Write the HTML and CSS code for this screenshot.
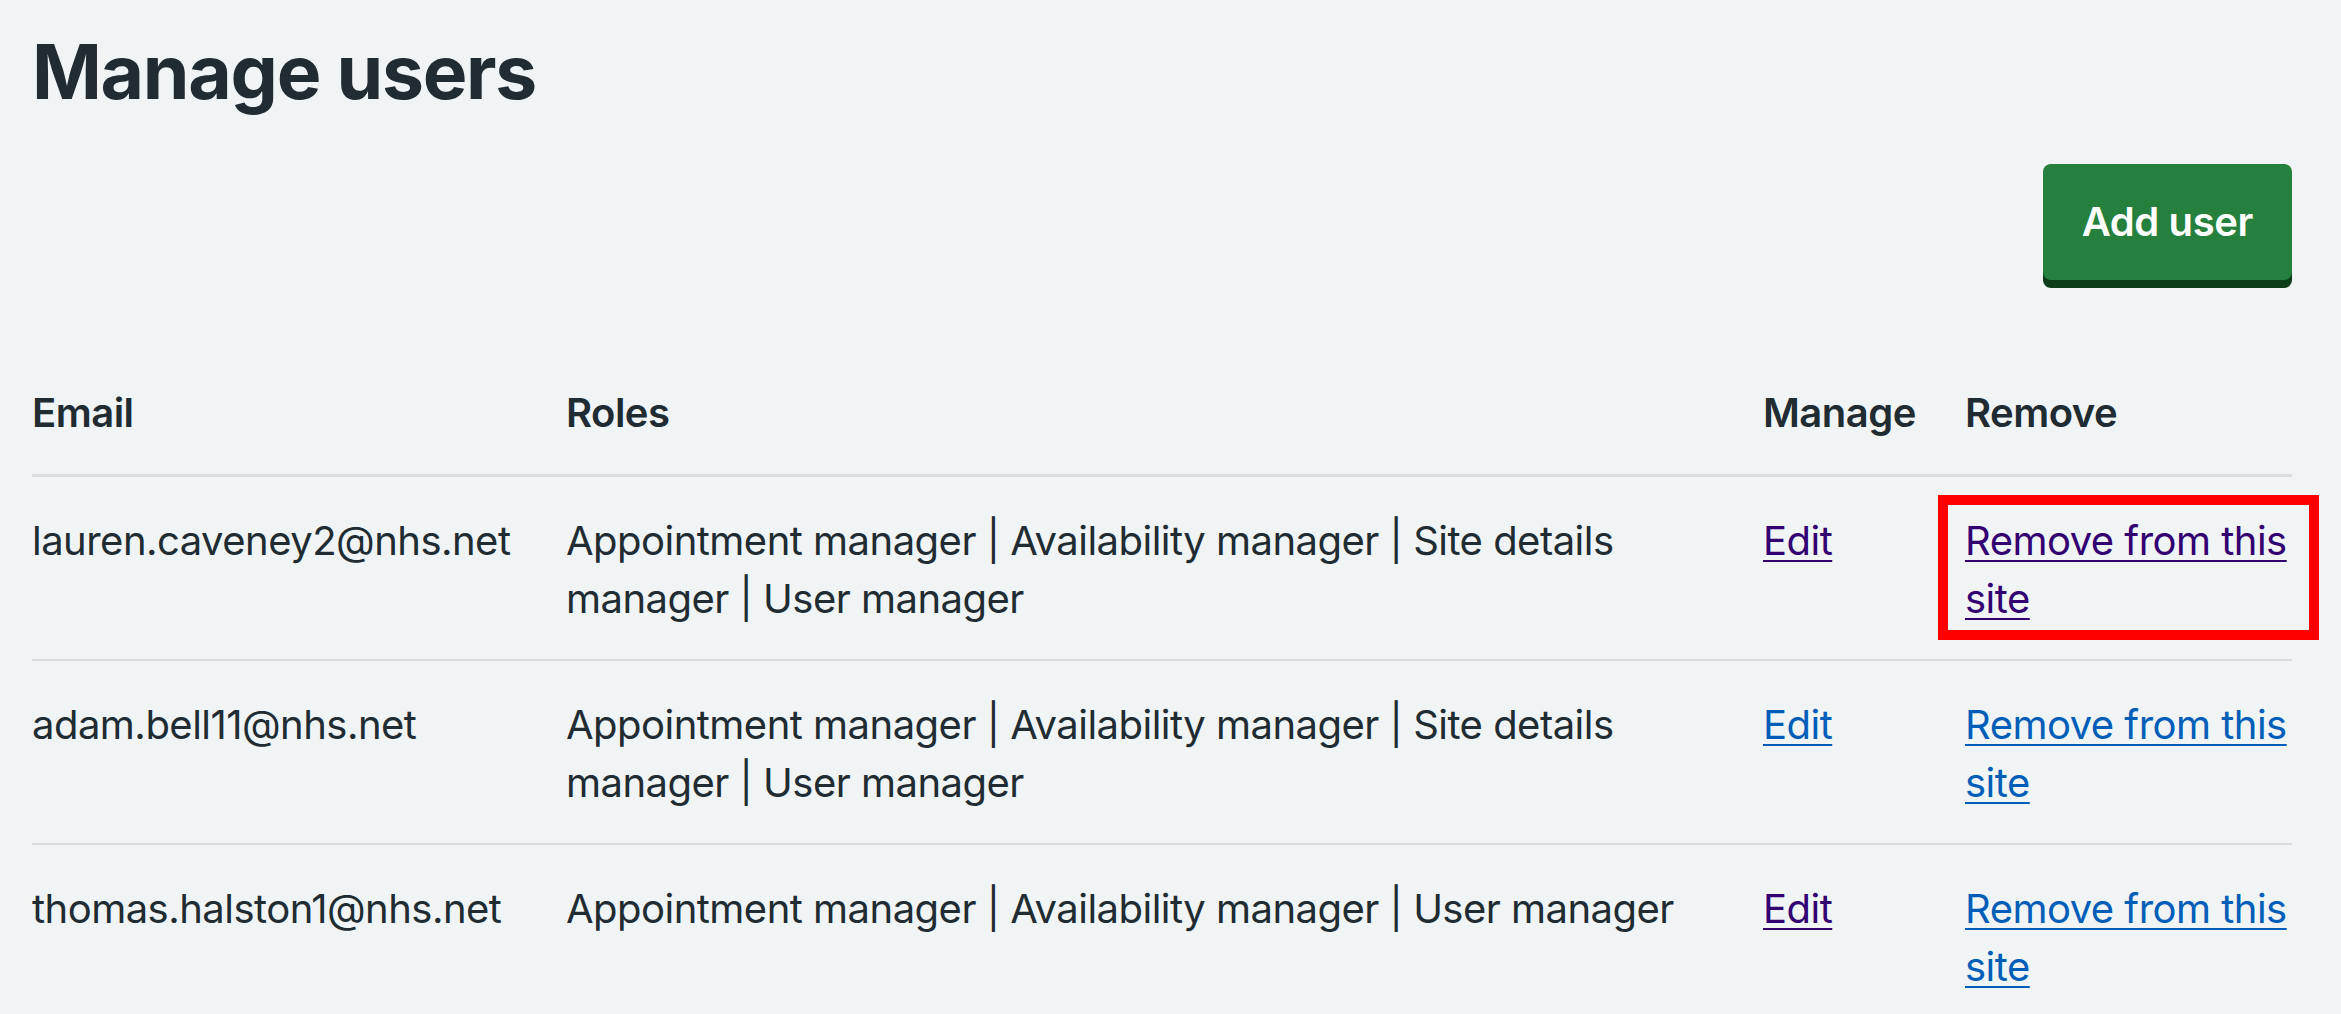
FILE: index.html
```html
<!DOCTYPE html>
<html lang="en">
<head>
  <meta charset="UTF-8">
  <title>Manage users</title>
  <link rel="stylesheet" href="styles.css">
</head>
<body>
  <div class="page">
    <h1 class="page-title">Manage users</h1>

    <div class="page-actions">
      <button class="button">Add user</button>
    </div>

    <table class="users-table">
      <colgroup>
        <col class="col-email">
        <col class="col-roles">
        <col class="col-manage">
        <col class="col-remove">
      </colgroup>
      <thead>
        <tr>
          <th>Email</th>
          <th>Roles</th>
          <th>Manage</th>
          <th>Remove</th>
        </tr>
      </thead>
      <tbody>
        <tr>
          <td>lauren.caveney2@nhs.net</td>
          <td>Appointment manager | Availability manager | Site details manager | User manager</td>
          <td><a href="#" class="link visited">Edit</a></td>
          <td>
            <div class="highlight">
              <a href="#" class="link visited">Remove from this site</a>
            </div>
          </td>
        </tr>
        <tr>
          <td>adam.bell11@nhs.net</td>
          <td>Appointment manager | Availability manager | Site details manager | User manager</td>
          <td><a href="#" class="link">Edit</a></td>
          <td><a href="#" class="link">Remove from this site</a></td>
        </tr>
        <tr>
          <td>thomas.halston1@nhs.net</td>
          <td>Appointment manager | Availability manager | User manager</td>
          <td><a href="#" class="link visited">Edit</a></td>
          <td><a href="#" class="link">Remove from this site</a></td>
        </tr>
      </tbody>
    </table>
  </div>
</body>
</html>
```

FILE: styles.css
```css
body {
  margin: 0;
  padding: 0;
  background-color: #f0f4f5;
  color: #212b32;
  font-family: Inter, "Liberation Sans", Arial, sans-serif;
  font-size: 40px;
  line-height: 58px;
  letter-spacing: -0.013em;
}

.page {
  padding: 28px 49px 0 32px;
}

.page-title {
  margin: 0;
  font-size: 75px;
  line-height: 87px;
  font-weight: 700;
  letter-spacing: -0.017em;
}

.page-actions {
  display: flex;
  justify-content: flex-end;
  margin-top: 49px;
  margin-bottom: 70px;
}

.button {
  font-family: inherit;
  font-size: 40px;
  line-height: 58px;
  font-weight: 600;
  letter-spacing: -0.01em;
  color: white;
  background-color: #26803d;
  border: 4px solid transparent;
  border-radius: 8px;
  padding: 25px 35px;
  box-shadow: 0 8px 0 #0b3d1b;
  cursor: pointer;
}

.users-table {
  width: 100%;
  border-collapse: collapse;
  table-layout: fixed;
}

.col-email {
  width: 534px;
}

.col-roles {
  width: 1197px;
}

.col-manage {
  width: 202px;
}

.col-remove {
  width: 327px;
}

.users-table th,
.users-table td {
  text-align: left;
  vertical-align: top;
  padding: 35px 33px 31px 0;
}

.users-table th {
  padding-top: 34px;
  padding-bottom: 32px;
  font-weight: 600;
  border-bottom: 3px solid #d8dde0;
}

.users-table th:last-child,
.users-table td:last-child {
  padding-right: 0;
}

.users-table td {
  font-weight: 400;
  border-bottom: 2px solid #d8dde0;
}

.users-table tbody tr:last-child td {
  border-bottom: none;
}

.link {
  color: #005eb8;
  text-decoration: underline;
  text-decoration-thickness: 2px;
  text-underline-offset: 5px;
}

.link.visited {
  color: #330072;
}

.highlight {
  position: relative;
}

.highlight::after {
  content: "";
  position: absolute;
  top: -17px;
  bottom: -12px;
  left: -27px;
  right: -27px;
  border: 10px solid #ff0000;
  pointer-events: none;
}
```
